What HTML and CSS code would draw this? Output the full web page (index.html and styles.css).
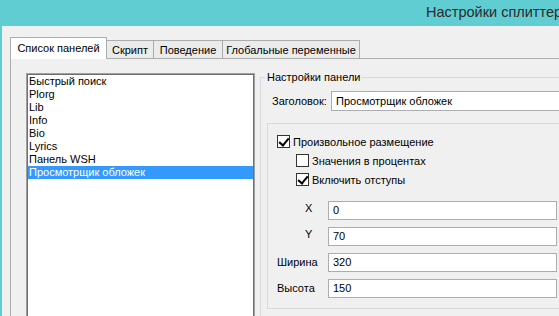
FILE: index.html
```html
<!DOCTYPE html>
<html lang="ru">
<head>
    <meta charset="UTF-8">
    <title>Настройки сплиттера</title>
    <link rel="stylesheet" href="styles.css">
</head>
<body>

    <div class="window">
        <div class="titlebar">
            <span class="title">Настройки сплиттера</span>
        </div>

        <div class="client">
            <!-- Tabs -->
            <div class="tabs">
                <div class="tab tab-active tab-panels">Список панелей</div>
                <div class="tab tab-script">Скрипт</div>
                <div class="tab tab-behavior">Поведение</div>
                <div class="tab tab-globals">Глобальные переменные</div>
            </div>

            <div class="tab-page">
                <ul class="panel-list">
                    <li>Быстрый поиск</li>
                    <li>Plorg</li>
                    <li>Lib</li>
                    <li>Info</li>
                    <li>Bio</li>
                    <li>Lyrics</li>
                    <li>Панель WSH</li>
                    <li class="selected">Просмотрщик обложек</li>
                </ul>

                <fieldset class="group">
                    <legend>Настройки панели</legend>

                    <div class="caption-row">
                        <span class="caption-label">Заголовок:</span>
                        <div class="field field-caption">Просмотрщик обложек</div>
                    </div>

                    <div class="frame">
                        <div class="check-row">
                            <span class="checkbox checked"></span>
                            <span>Произвольное размещение</span>
                        </div>
                        <div class="check-row indent">
                            <span class="checkbox"></span>
                            <span>Значения в процентах</span>
                        </div>
                        <div class="check-row indent">
                            <span class="checkbox checked"></span>
                            <span>Включить отступы</span>
                        </div>

                        <div class="coords">
                            <span class="coord-label axis">X</span>
                            <div class="field">0</div>
                            <span class="coord-label axis">Y</span>
                            <div class="field">70</div>
                            <span class="coord-label">Ширина</span>
                            <div class="field">320</div>
                            <span class="coord-label">Высота</span>
                            <div class="field">150</div>
                        </div>
                    </div>
                </fieldset>
            </div>
        </div>
    </div>

</body>
</html>
```

FILE: styles.css
```css
/* Basic reset */
* {
    margin: 0;
    padding: 0;
    box-sizing: border-box;
}

html, body {
    overflow: hidden;
}

body {
    font-family: 'Liberation Sans', Arial, sans-serif;
    font-size: 11px;
    color: #000;
    background: #f0f0f0;
    width: 559px;
    height: 316px;
}

/* Window frame */
.window {
    width: 640px;
    height: 316px;
    border-left: 2px solid #5fcdd2;
    background: #f0f0f0;
}

.titlebar {
    height: 26px;
    background: #5fcdd2;
    white-space: nowrap;
    overflow: hidden;
}

.title {
    display: block;
    padding-left: 424px;
    font-size: 14.5px;
    line-height: 25px;
    color: #2b2b2b;
}

.client {
    padding: 11px 0 0 8px;
}

/* Tabs */
.tabs {
    display: flex;
    align-items: flex-end;
    height: 21px;
}

.tab {
    height: 18px;
    line-height: 18px;
    text-align: center;
    background: #ebebeb;
    border: 1px solid #acacac;
    border-left: none;
    border-bottom: none;
    white-space: nowrap;
}

.tab-active {
    position: relative;
    z-index: 1;
    height: 22px;
    margin-bottom: -1px;
    line-height: 20px;
    padding-bottom: 2px;
    background: #fff;
    border-left: 1px solid #acacac;
}

.tab-panels { width: 97px; }
.tab-script { width: 47px; }
.tab-behavior { width: 69px; }
.tab-globals { width: 137px; }

.tab-page {
    display: flex;
    align-items: flex-start;
    height: 300px;
    border: 1px solid #adadad;
    padding: 14px 0 0 15px;
}

/* Panel list */
.panel-list {
    list-style: none;
    width: 229px;
    height: 260px;
    background: #fff;
    border: 1px solid #a0a0a0;
    box-shadow: inset 0 0 0 1px #6e6e6e;
    padding: 1px;
}

.panel-list li {
    height: 13px;
    line-height: 13px;
    padding-left: 1px;
    white-space: nowrap;
}

.panel-list li.selected {
    background: #3399ff;
    color: #fff;
}

/* Group box */
.group {
    width: 330px;
    height: 260px;
    margin: -3px 0 0 5px;
    border: 1px solid #d9d9d9;
    padding: 0 8px 0 4px;
}

.group legend {
    padding: 0 2px;
    line-height: 14px;
}

.caption-row {
    display: flex;
    align-items: center;
    margin-top: 7px;
}

.caption-label {
    width: 66px;
    padding-left: 7px;
}

.field {
    height: 19px;
    line-height: 17px;
    padding-left: 4px;
    background: #fff;
    border: 1px solid #abadb3;
    white-space: nowrap;
}

.field-caption {
    flex: 1;
    height: 20px;
    line-height: 18px;
}

.frame {
    margin: 12px 0 0 2px;
    border: 1px solid #d9d9d9;
    padding: 8px 0 10px 9px;
}

.check-row {
    display: flex;
    align-items: center;
    gap: 3px;
    height: 19px;
}

.check-row.indent {
    padding-left: 19px;
}

.checkbox {
    position: relative;
    width: 13px;
    height: 13px;
    background: #fff;
    border: 1px solid #333;
}

.checkbox.checked::after {
    content: '';
    position: absolute;
    left: 3px;
    top: 0px;
    width: 4px;
    height: 8px;
    border-right: 2px solid #000;
    border-bottom: 2px solid #000;
    transform: rotate(40deg);
}

/* Coordinates */
.coords {
    display: grid;
    grid-template-columns: 51px 229px;
    grid-auto-rows: 19px;
    row-gap: 7px;
    margin-top: 12px;
}

.coord-label {
    display: block;
    height: 19px;
    line-height: 19px;
}

.coord-label.axis {
    padding-left: 28px;
    line-height: 15px;
}
```
